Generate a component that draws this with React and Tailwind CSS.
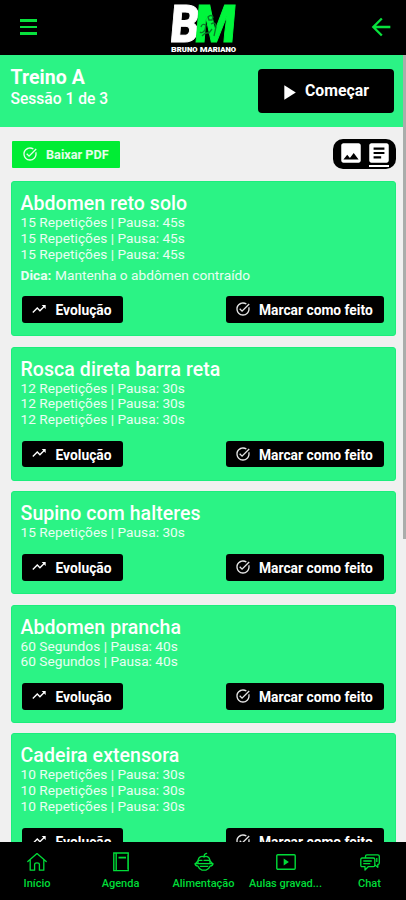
import { MdArticle, MdArrowBack, MdImage, MdPlayArrow, MdTaskAlt, MdTrendingUp } from 'react-icons/md'

const EXERCISES = [
  {
    name: 'Abdomen reto solo',
    sets: ['15 Repetições | Pausa: 45s', '15 Repetições | Pausa: 45s', '15 Repetições | Pausa: 45s'],
    tip: 'Mantenha o abdômen contraído',
  },
  {
    name: 'Rosca direta barra reta',
    sets: ['12 Repetições | Pausa: 30s', '12 Repetições | Pausa: 30s', '12 Repetições | Pausa: 30s'],
  },
  { name: 'Supino com halteres', sets: ['15 Repetições | Pausa: 30s'] },
  { name: 'Abdomen prancha', sets: ['60 Segundos | Pausa: 40s', '60 Segundos | Pausa: 40s'] },
  {
    name: 'Cadeira extensora',
    sets: ['10 Repetições | Pausa: 30s', '10 Repetições | Pausa: 30s', '10 Repetições | Pausa: 30s'],
  },
]

function HomeIcon() {
  return (
    <svg viewBox="0 0 20 20" className="w-5 h-5" fill="none" stroke="currentColor" strokeWidth="1.3" strokeLinejoin="round" strokeLinecap="round">
      <path d="M.8 9.6 10 1.6l9.2 8M3.2 7.8V18.2H7.6V12.6Q7.6 10.8 10 10.8T12.4 12.6V18.2H16.8V7.8" />
    </svg>
  )
}

function AgendaIcon() {
  return (
    <svg viewBox="0 0 20 20" className="w-5 h-5" fill="none" stroke="currentColor" strokeWidth="1.4">
      <path d="M2.8 1h14.4v17.6H2.8zM5.2 1v17.6M17 3v14" />
      <path d="M7.5 5.6h7.5" strokeWidth="1.8" />
    </svg>
  )
}

function FoodIcon() {
  return (
    <svg viewBox="0 0 20 20" className="w-5 h-5" fill="none" stroke="currentColor" strokeWidth="1.3" strokeLinecap="round" strokeLinejoin="round">
      <path d="M10 4.5c0-1.5.8-2.8 2.6-3.2M4 11C3.4 7 5.5 4.3 8 4.3c1 0 1.2.5 2 .5s1-.5 2-.5c2.500 0 4.6 2.7 4 6.7" />
      <path d="M1 11.6h18c0 1.8-1.2 2.4-3 2.6-.8 2-2.2 3.4-4 3.9H8c-1.8-.5-3.2-1.9-4-3.9-1.8-.2-3-.8-3-2.6z" />
      <path d="M5 8.3h3M10 8.3h5M6.3 14.3h7.5M2 11l2-2M18 11l-2-2" />
    </svg>
  )
}

function VideoIcon() {
  return (
    <svg viewBox="0 0 20 20" className="w-5 h-5" fill="none" stroke="currentColor" strokeWidth="1.4">
      <rect x=".8" y="2.7" width="18.4" height="14.6" rx="1" />
      <path d="M7.7 6.6v6.8l5.2-3.4z" fill="currentColor" stroke="none" />
    </svg>
  )
}

function ChatIcon() {
  return (
    <svg viewBox="0 0 20 20" className="w-5 h-5" fill="none" stroke="currentColor" strokeWidth="1.3" strokeLinejoin="round">
      <path d="M5.5 6V4.2Q5.5 2.8 7 2.8H17.8Q19.3 2.8 19.3 4.3V11Q19.3 12.5 17.8 12.5V15.3L15 13" />
      <path d="M2.2 6H13.3Q14.8 6 14.8 7.5V13.2Q14.8 14.7 13.3 14.7H8.2L5 18V14.7H2.2Q.8 14.7.8 13.2V7.5Q.8 6 2.2 6zM3.3 9h8.5M3.3 11.6h7M16.8 6v4" />
    </svg>
  )
}

const TABS = [
  { label: 'Início', icon: HomeIcon, className: 'w-[74px]' },
  { label: 'Agenda', icon: AgendaIcon, className: 'w-[93px]' },
  { label: 'Alimentação', icon: FoodIcon, className: 'w-[73px]' },
  { label: 'Aulas gravad...', icon: VideoIcon, className: 'w-[91px]' },
  { label: 'Chat', icon: ChatIcon, className: 'w-[77px]' },
]

function Logo() {
  return (
    <svg viewBox="0 0 70 54" className="w-[70px] h-[54px] overflow-visible">
      <g fontFamily="Roboto, sans-serif" fontWeight="900" transform="translate(3.6 0) skewX(-5)">
        <text x="-1" y="42" fontSize="52" textLength="29" lengthAdjust="spacingAndGlyphs" fill="#fff" stroke="#fff">B</text>
        <text x="23.5" y="42" fontSize="52" textLength="41" lengthAdjust="spacingAndGlyphs" fill="#00f63c" stroke="#00f63c">M</text>
      </g>
      <path
        d="M38 17q3-3 5 0l-1 3h-3zM31 27q1-4 5-2l-1 5q-3 4-5 2M41 24q5-3 5 3l-2 9M32 36q3-4 7-3l3-4"
        fill="none"
        stroke="#087b29"
        strokeWidth="1.3"
      />
      <text
        x="1"
        y="52.3"
        className="[font-variant-caps:small-caps]"
        fontFamily="Roboto, sans-serif"
        fontSize="8"
        fontWeight="900"
        textLength="65"
        lengthAdjust="spacingAndGlyphs"
        fill="#fff"
      >
        Bruno Mariano
      </text>
    </svg>
  )
}

function ExerciseCard({ name, sets, tip }) {
  return (
    <div className="rounded-[3px] bg-[#2bf385] border border-[#1ced7c] px-[8.5px] pt-[11px] pb-[12.6px] shrink-0">
      <h2 className="text-[19.5px] leading-[22px] font-medium tracking-[0.07px] whitespace-nowrap">{name}</h2>
      {sets.map((set, i) => (
        <p key={i} className="text-[13.7px] leading-[15.8px] tracking-[0.02px] text-white/90">{set}</p>
      ))}
      {tip && (
        <p className="mt-[4.5px] text-[13.7px] leading-4 tracking-[0.03px] text-white/90"><b>Dica:</b> {tip}</p>
      )}
      <div className="flex justify-between mt-[13.2px] pl-[1.5px] pr-[2.5px]">
        <button className="h-[26.3px] w-[101px] pl-[9px] pt-[2px] rounded-[3px] bg-black flex items-center gap-[8.5px] text-[13.8px] font-bold">
          <MdTrendingUp className="w-4 h-4 mb-[4px]" /> Evolução
        </button>
        <button className="h-[26.3px] w-[158px] pl-[9px] pt-[2px] rounded-[3px] bg-black flex items-center gap-[8px] text-[13.8px] font-bold whitespace-nowrap">
          <MdTaskAlt className="w-4 h-4 mb-[3px] text-white/90" /> Marcar como feito
        </button>
      </div>
    </div>
  )
}

export default function App() {
  return (
    <div className="relative w-[406px] h-[900px] overflow-hidden flex flex-col bg-[#f0f0f0] text-white font-[Roboto,sans-serif]">
      <header className="h-[55px] shrink-0 bg-black flex items-start justify-between pl-5 pr-4 text-[#08e13d]">
        <button className="w-[60px] mt-[19px] flex flex-col gap-1">
          <span className="block w-[17px] h-[2.5px] bg-current" />
          <span className="block w-[17px] h-[2.5px] bg-current" />
          <span className="block w-[17px] h-[2.5px] bg-current" />
        </button>
        <Logo />
        <button className="w-[60px] mt-[13px] flex justify-end"><MdArrowBack className="w-[28px] h-[28px] -mr-[5px]" /></button>
      </header>

      <section className="h-[72px] shrink-0 bg-[#2bf385] flex items-start justify-between pl-[10.5px] pr-3">
        <div className="pt-[12px]">
          <h1 className="text-[19.5px] leading-[22px] font-bold tracking-[0.05px]">Treino A</h1>
          <p className="text-[15.6px] leading-[20px] font-medium">Sessão 1 de 3</p>
        </div>
        <button className="mt-[14px] w-[136px] h-[44px] rounded-[4px] bg-black flex items-center pl-[18px] gap-[4px] text-[15.8px] font-bold">
          <MdPlayArrow className="w-[25px] h-[25px] mt-[2px]" /> Começar
        </button>
      </section>

      <main className="flex-1 min-h-0 overflow-hidden flex flex-col pl-[11px] pr-[10px]">
        <div className="h-[54.3px] shrink-0 flex items-start justify-between pl-[1px]">
          <button className="mt-[14px] w-[108px] h-[27px] bg-[#00ed34] rounded-[1px] flex items-center pl-[10px] gap-[8px] text-[12.7px] font-bold text-white/90">
            <MdTaskAlt className="w-4 h-4 mb-[2px]" /> <span className="pt-px">Baixar PDF</span>
          </button>
          <div className="mt-[12px] w-[63px] h-[30px] rounded-[10px] bg-black flex items-start pl-[5px] pt-[1px] gap-[2px]">
            <MdImage className="w-[26px] h-[26px]" />
            <div className="relative">
              <MdArticle className="w-[26px] h-[26px]" />
              <span className="absolute left-[3px] top-[25px] w-5 h-[2px] bg-white" />
            </div>
          </div>
        </div>
        <div className="flex flex-col gap-[10.3px]">
          {EXERCISES.map((exercise) => (
            <ExerciseCard key={exercise.name} {...exercise} />
          ))}
        </div>
      </main>

      <nav className="h-[58px] shrink-0 bg-black flex text-[#00dc38]">
        {TABS.map(({ label, icon: Icon, className }) => (
          <div key={label} className={`${className} pt-[10px] flex flex-col items-center shrink-0`}>
            <Icon />
            <span className="mt-[5px] text-[11px] leading-[14px] font-medium whitespace-nowrap">{label}</span>
          </div>
        ))}
      </nav>

      <div className="absolute right-0 top-[55px] w-[3px] h-[484px] bg-[#a9adab]" />
    </div>
  )
}
